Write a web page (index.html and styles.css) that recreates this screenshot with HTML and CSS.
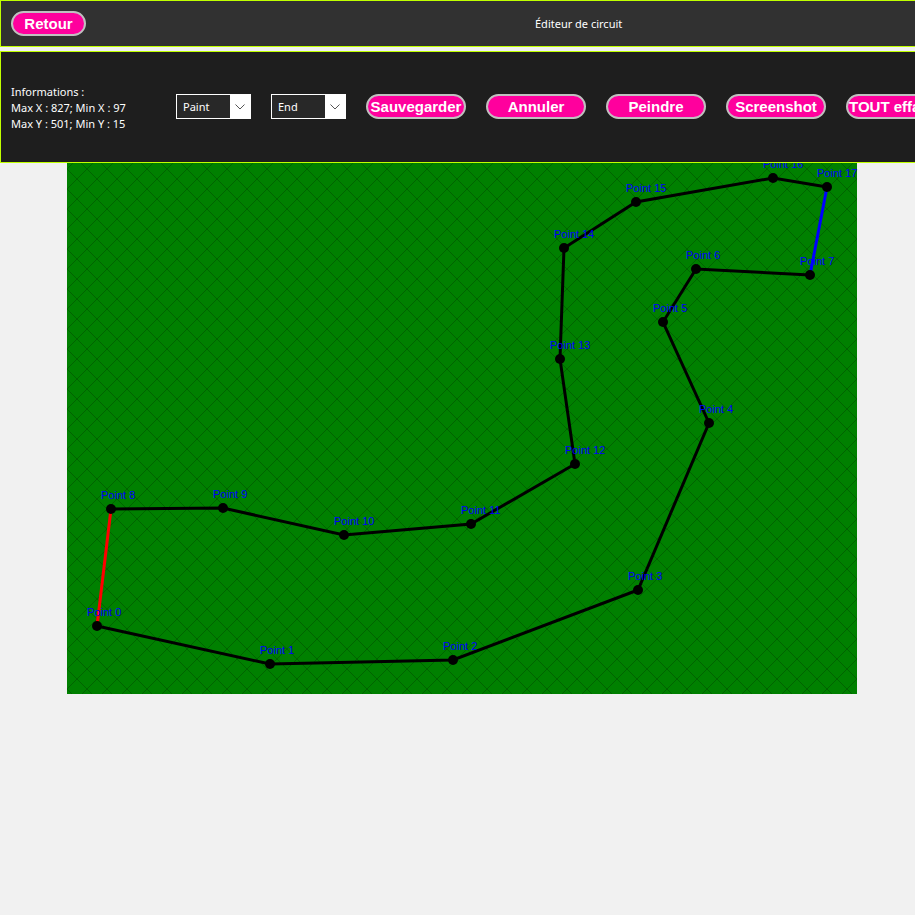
FILE: index.html
```html
<!DOCTYPE html>
<html lang="fr">
<head>
<meta charset="utf-8">
<title>Éditeur de circuit</title>
<link rel="stylesheet" href="styles.css">
</head>
<body>
<header class="titlebar">
  <button class="btn btn-back" type="button">Retour</button>
  <h1 class="title">Éditeur de circuit</h1>
</header>
<section class="toolbar">
  <p class="info">Informations :<br>Max X : 827; Min X : 97<br>Max Y : 501; Min Y : 15</p>
  <div class="picker">
    <select class="select" aria-label="Mode"><option>Paint</option></select>
    <svg class="chevron" viewBox="0 0 20 23" aria-hidden="true"><path d="M5.500 9.500l4.500 4.500l4.500-4.500"/></svg>
  </div>
  <div class="picker">
    <select class="select" aria-label="Position"><option>End</option></select>
    <svg class="chevron" viewBox="0 0 20 23" aria-hidden="true"><path d="M5.500 9.500l4.500 4.500l4.500-4.500"/></svg>
  </div>
  <button class="btn" type="button">Sauvegarder</button>
  <button class="btn" type="button">Annuler</button>
  <button class="btn" type="button">Peindre</button>
  <button class="btn" type="button">Screenshot</button>
  <button class="btn" type="button">TOUT effacer</button>
</section>
<main class="stage">
  <svg class="circuit" role="img" aria-label="Circuit">
    <defs>
      <pattern id="hatch" width="20" height="20" x="67" y="6" patternUnits="userSpaceOnUse">
        <path class="hatch" d="M-1 -1L21 21M21 -1L-1 21"/>
      </pattern>
      <marker id="dot" viewBox="0 0 10 10" refX="5" refY="5" markerWidth="10" markerHeight="10" markerUnits="userSpaceOnUse"><circle cx="5" cy="5" r="5"/></marker>
    </defs>
    <rect class="grass" x="67" width="790" height="531"/>
    <rect x="67" width="790" height="531" fill="url(#hatch)"/>
    <path class="edge edge-start" d="M97 463L111 346"/>
    <path class="edge edge-end" d="M810 112L827 24"/>
    <polyline class="edge track" points="97,463 270,501 453,497 638,427 709,260 663,159 696,106 810,112"/>
    <polyline class="edge track" points="111,346 223,345 344,372 471,361 575,301 560,196 564,85 636,39 773,15 827,24"/>
    <g class="labels">
      <text x="87" y="453">Point 0</text>
      <text x="260" y="491">Point 1</text>
      <text x="443" y="487">Point 2</text>
      <text x="628" y="417">Point 3</text>
      <text x="699" y="250">Point 4</text>
      <text x="653" y="149">Point 5</text>
      <text x="686" y="96">Point 6</text>
      <text x="800" y="102">Point 7</text>
      <text x="101" y="336">Point 8</text>
      <text x="213" y="335">Point 9</text>
      <text x="334" y="362">Point 10</text>
      <text x="461" y="351">Point 11</text>
      <text x="565" y="291">Point 12</text>
      <text x="550" y="186">Point 13</text>
      <text x="554" y="75">Point 14</text>
      <text x="626" y="29">Point 15</text>
      <text x="763" y="5">Point 16</text>
      <text x="817" y="14">Point 17</text>
    </g>
  </svg>
</main>
</body>
</html>
```
FILE: styles.css
```css
* { box-sizing: border-box; }
body {
  margin: 0;
  min-height: 100vh;
  overflow: hidden;
  background: #f1f1f1;
  color: #fff;
  font: 11px/16px "Noto Sans", sans-serif;
}
.titlebar, .toolbar {
  display: flex;
  align-items: center;
  padding: 0 10px;
  border: 1px solid #c0ff00;
  border-right: 0;
}
.titlebar {
  gap: 449px;
  height: 47px;
  background: #313131;
}
.title { margin: 0; font-size: 11px; font-weight: 400; white-space: nowrap; }
.toolbar {
  gap: 20px;
  height: 112px;
  margin-top: 4px;
  padding-bottom: 1px;
  background: #1e1e1e;
}
.info { flex: 0 0 145px; margin: 0; padding-top: 2px; white-space: nowrap; }
.btn {
  flex: none;
  width: 100px;
  height: 25px;
  padding: 0;
  border: 2px solid #c0c0c0;
  border-radius: 13px;
  background: #ff009d;
  color: #fff;
  font: bold 15px/20px "Liberation Sans", Arial, sans-serif;
  white-space: nowrap;
}
.btn-back { width: 75px; }
.picker {
  display: grid;
  flex: none;
  grid-template-columns: 1fr 20px;
  width: 75px;
  height: 25px;
  border: 1px solid #fff;
  background: #282828;
}
.select {
  grid-area: 1 / 1 / 2 / 3;
  appearance: none;
  padding: 0 6px;
  border: 0;
  background: transparent;
  color: #fff;
  font: 11px/16px "Noto Sans", sans-serif;
}
.chevron {
  grid-area: 1 / 2;
  width: 20px;
  height: 23px;
  background: #fff;
  fill: none;
  stroke: #555;
  pointer-events: none;
}
.circuit { display: block; width: 100%; height: 531px; }
.grass { fill: #008000; }
.hatch { fill: none; stroke: #006400; stroke-width: 1; }
.edge { fill: none; stroke-width: 3; }
.edge-start { stroke: #f00; }
.edge-end { stroke: #00f; }
.track { stroke: #000; marker: url(#dot); }
.labels { fill: #00f; font: 11px "Liberation Sans", Arial, sans-serif; }
```
